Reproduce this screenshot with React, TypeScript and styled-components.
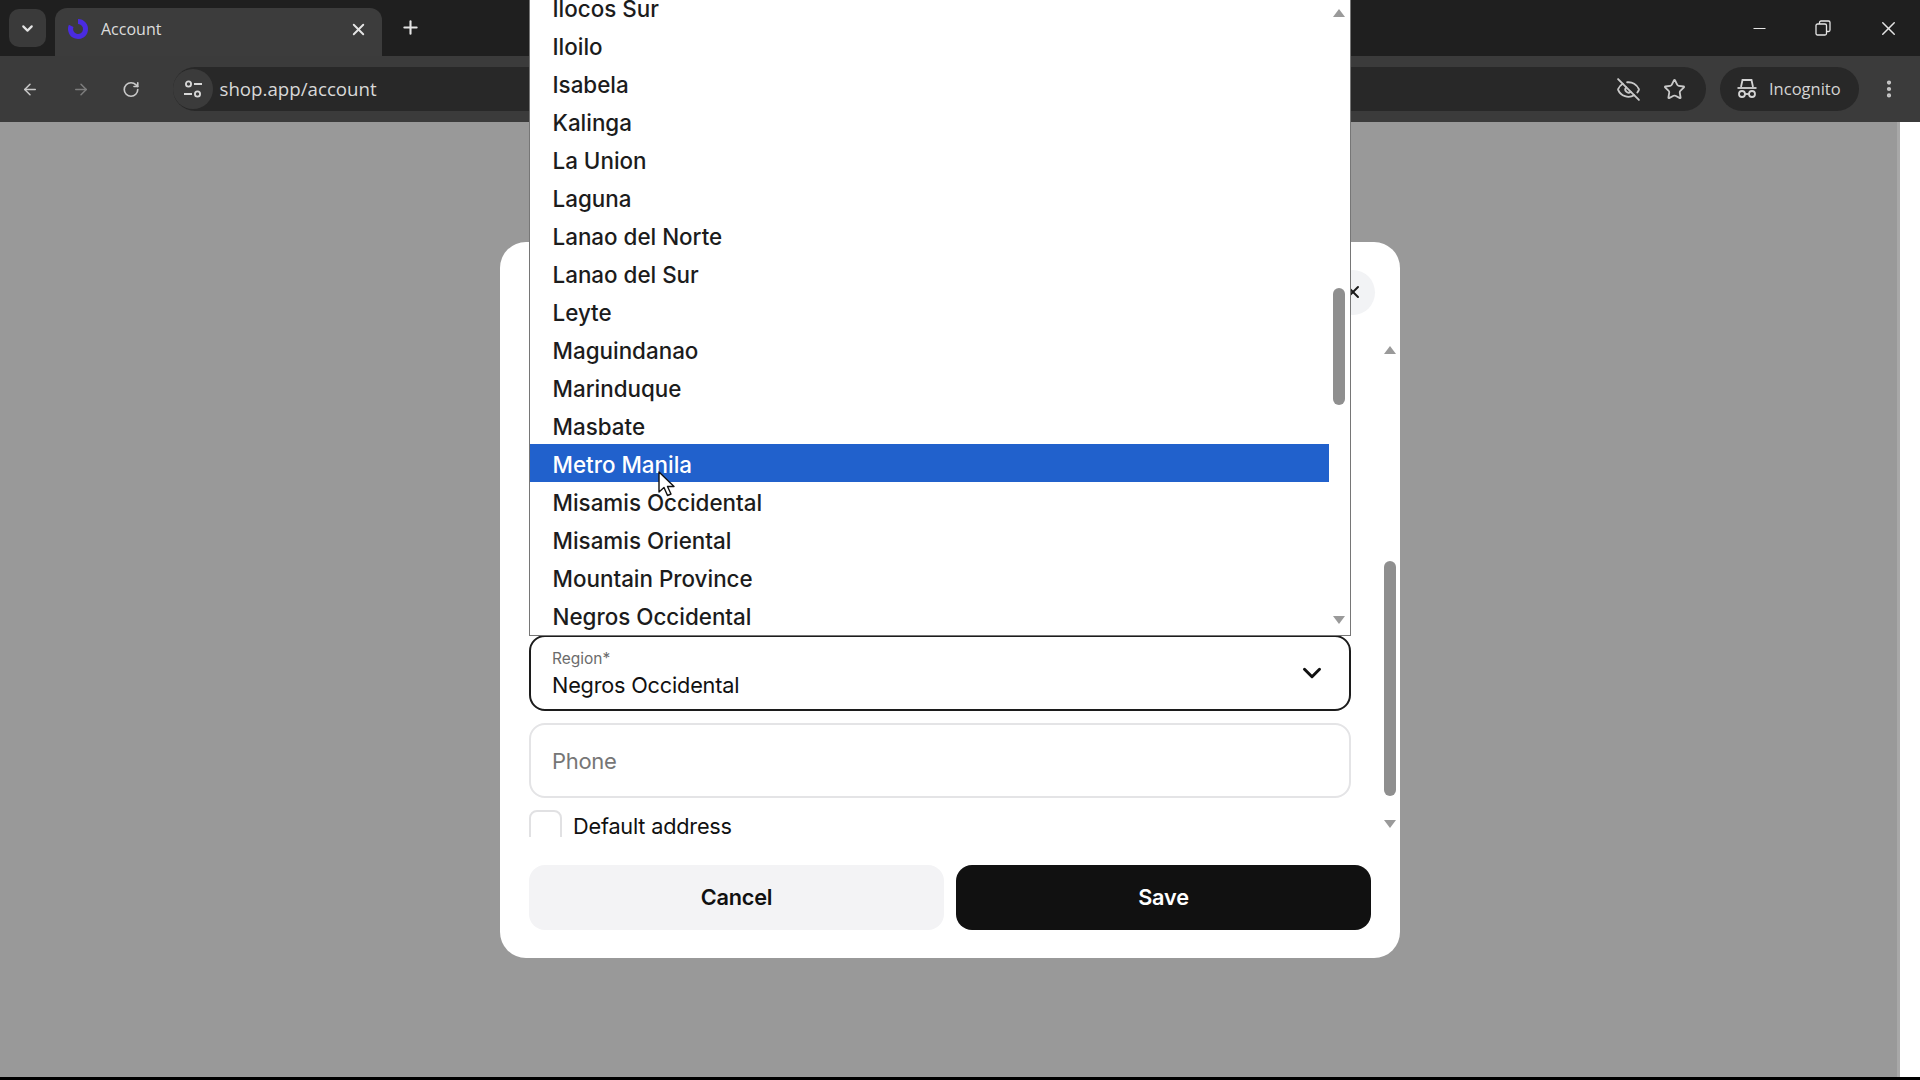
import React from 'react';
import styled, { createGlobalStyle } from 'styled-components';
import {
  ArrowLeft,
  ArrowRight,
  ChevronDown,
  EllipsisVertical,
  EyeOff,
  Minus,
  Plus,
  RotateCw,
  Star,
  X,
} from 'lucide-react';

const regions = [
  'Ilocos Sur',
  'Iloilo',
  'Isabela',
  'Kalinga',
  'La Union',
  'Laguna',
  'Lanao del Norte',
  'Lanao del Sur',
  'Leyte',
  'Maguindanao',
  'Marinduque',
  'Masbate',
  'Metro Manila',
  'Misamis Occidental',
  'Misamis Oriental',
  'Mountain Province',
  'Negros Occidental',
];

const GlobalStyle = createGlobalStyle`
  html, body {
    margin: 0;
    padding: 0;
    background: #000;
  }
  body {
    font-family: Inter, "Liberation Sans", sans-serif;
    overflow: hidden;
  }
  * {
    box-sizing: border-box;
  }
`;

const Screen = styled.div`
  position: relative;
  width: 1920px;
  height: 1080px;
  display: flex;
  flex-direction: column;
  overflow: hidden;
`;

const TabStrip = styled.div`
  height: 56px;
  flex: none;
  background: #1f1f1f;
  display: flex;
  align-items: flex-end;
  padding-left: 9px;
  color: #e4e4e4;
`;

const TabMenu = styled.div`
  width: 37px;
  height: 38px;
  margin-bottom: 9px;
  border-radius: 10px;
  background: #3a3a3a;
  display: flex;
  align-items: center;
  justify-content: center;
`;

const Tab = styled.div`
  width: 327px;
  height: 48px;
  margin-left: 9px;
  padding: 0 14px 6px 12px;
  border-radius: 12px 12px 0 0;
  background: #3c3c3c;
  display: flex;
  align-items: center;
`;

const TabTitle = styled.span`
  flex: 1;
  margin-left: 12px;
  font-family: "Open Sans", sans-serif;
  font-size: 16px;
  color: #dcdcdc;
`;

const NewTab = styled.div`
  margin: 0 0 18px 18px;
  display: flex;
`;

const WindowControls = styled.div`
  margin-left: auto;
  height: 56px;
  padding-right: 20px;
  display: flex;
  align-items: center;
  gap: 46px;
`;

const Toolbar = styled.div`
  height: 66px;
  flex: none;
  background: #3b3b3b;
  display: flex;
  align-items: center;
  padding-left: 21px;
  color: #c9c9c9;
`;

const NavButton = styled.div<{ $dim?: boolean }>`
  width: 18px;
  display: flex;
  justify-content: center;
  margin-right: 32.5px;
  color: ${({ $dim }) => ($dim ? '#7d7d7d' : '#c9c9c9')};
`;

const AddressBar = styled.div`
  width: 1533.5px;
  height: 44px;
  padding-right: 20px;
  border-radius: 22px;
  background: #282828;
  display: flex;
  align-items: center;
`;

const SiteButton = styled.div`
  width: 40px;
  height: 40px;
  border-radius: 50%;
  background: #3b3b3b;
  display: flex;
  align-items: center;
  justify-content: center;
`;

const AddressText = styled.span`
  flex: 1;
  margin: 0 0 2px 7px;
  font-family: "Open Sans", sans-serif;
  font-size: 18.7px;
  color: #d8d8d8;
`;

const AddressIcons = styled.div`
  display: flex;
  align-items: center;
  gap: 22px;
`;

const IncognitoPill = styled.div`
  width: 139px;
  height: 44px;
  margin-left: 14px;
  padding: 0 0 2px 16px;
  border-radius: 22px;
  background: #282828;
  display: flex;
  align-items: center;
  gap: 11px;
  font-family: "Open Sans", sans-serif;
  font-size: 16.5px;
  color: #d4d4d4;
`;

const ToolbarMenu = styled.div`
  margin-left: 19px;
  display: flex;
`;

const Body = styled.div`
  flex: 1;
  display: flex;
  min-height: 0;
`;

const Overlay = styled.div`
  flex: 1;
  background: #999999;
  box-shadow: inset -3px 0 0 #a8a8a8;
  display: flex;
  align-items: center;
  justify-content: center;
`;

const Gutter = styled.div`
  width: 20px;
  flex: none;
  background: #fff;
`;

const BottomEdge = styled.div`
  height: 3px;
  flex: none;
  background: #000;
`;

const Modal = styled.div`
  width: 900px;
  height: 716px;
  padding: 28px 4px 28px 29px;
  border-radius: 26px;
  background: #fff;
  display: flex;
  flex-direction: column;
`;

const ModalHeader = styled.div`
  height: 45px;
  flex: none;
  padding-right: 21px;
  display: flex;
  justify-content: flex-end;
`;

const CloseButton = styled.div`
  width: 44px;
  height: 45px;
  border-radius: 50%;
  background: #f2f3f5;
  display: flex;
  align-items: center;
  justify-content: center;
  color: #1a1a1a;
`;

const ModalBody = styled.div`
  height: 497px;
  margin-top: 25px;
  flex: none;
  display: flex;
  gap: 33px;
`;

const Fields = styled.div`
  width: 822px;
  height: 100%;
  overflow: hidden;
  display: flex;
  flex-direction: column;
  justify-content: flex-end;
`;

const SelectBox = styled.div`
  height: 76px;
  flex: none;
  padding: 0 22px 0 21px;
  border: 2px solid #1c1c1c;
  border-radius: 16px;
  display: flex;
  align-items: center;
  justify-content: space-between;
`;

const SelectText = styled.div`
  padding-top: 3px;
  display: flex;
  flex-direction: column;
`;

const SelectLabel = styled.span`
  font-size: 15.5px;
  line-height: 20px;
  color: #6b6b6b;
`;

const SelectValue = styled.span`
  margin-top: 2px;
  font-size: 21.7px;
  line-height: 28px;
  letter-spacing: -0.2px;
  color: #111;
`;

const PhoneInput = styled.div`
  height: 75px;
  flex: none;
  margin-top: 12px;
  padding: 1px 21px 0;
  border: 2px solid #e4e4e6;
  border-radius: 16px;
  display: flex;
  align-items: center;
  font-size: 22px;
  letter-spacing: -0.3px;
  color: #767676;
`;

const CheckRow = styled.div`
  height: 27px;
  flex: none;
  margin-top: 12px;
  display: flex;
  gap: 11px;
`;

const CheckBox = styled.div`
  width: 33px;
  height: 36px;
  flex: none;
  border: 2px solid #e1e1e3;
  border-radius: 8px;
`;

const CheckLabel = styled.span`
  margin-top: 5px;
  font-size: 21.7px;
  line-height: 22px;
  letter-spacing: -0.2px;
  color: #111;
`;

const ScrollTrack = styled.div`
  width: 12px;
  padding-top: 6px;
  display: flex;
  flex-direction: column;
  align-items: center;
`;

const ScrollThumb = styled.div<{ $height: number; $top: number }>`
  width: 12px;
  height: ${({ $height }) => $height}px;
  margin-top: ${({ $top }) => $top}px;
  border-radius: 6px;
  background: #8f8f8f;
`;

const ArrowUp = styled.div`
  width: 0;
  height: 0;
  border-left: 6px solid transparent;
  border-right: 6px solid transparent;
  border-bottom: 8px solid #9a9a9a;
`;

const ArrowDown = styled(ArrowUp)<{ $top: number }>`
  margin-top: ${({ $top }) => $top}px;
  border-bottom: 0;
  border-top: 8px solid #9a9a9a;
`;

const ModalFooter = styled.div`
  margin-top: 28px;
  height: 65px;
  flex: none;
  display: flex;
  gap: 12px;
`;

const FooterButton = styled.div<{ $primary?: boolean }>`
  width: 415px;
  border-radius: 16px;
  background: ${({ $primary }) => ($primary ? '#111111' : '#f3f3f5')};
  color: ${({ $primary }) => ($primary ? '#fff' : '#111')};
  display: flex;
  align-items: center;
  justify-content: center;
  font-size: 21.7px;
  font-weight: 600;
  letter-spacing: -0.2px;
`;

const Dropdown = styled.div`
  position: absolute;
  left: 529px;
  top: 0;
  width: 822px;
  height: 636px;
  background: #fff;
  border: 1px solid #767676;
  border-top: 0;
  display: flex;
  overflow: hidden;
`;

const OptionList = styled.div`
  width: 799px;
  margin-top: -12px;
  flex: none;
`;

const Option = styled.div<{ $active?: boolean }>`
  height: 38px;
  padding: 2px 0 0 22.5px;
  display: flex;
  align-items: center;
  font-size: 22.4px;
  font-weight: 500;
  background: ${({ $active }) => ($active ? '#2161cc' : 'transparent')};
  color: ${({ $active }) => ($active ? '#fff' : '#1c1c1c')};
`;

const DropdownScroll = styled.div`
  flex: 1;
  padding: 9px 1px 0 0;
  display: flex;
  flex-direction: column;
  align-items: center;
`;

const Cursor = styled.svg`
  position: absolute;
  left: 657px;
  top: 471px;
`;

function TuneIcon() {
  return (
    <svg width="20" height="20" viewBox="0 0 20 20" fill="none" stroke="#d8d8d8" strokeWidth="1.8">
      <circle cx="5.5" cy="5" r="2.6" />
      <path d="M11 5h8M1 15h8" />
      <circle cx="14.5" cy="15" r="2.6" />
    </svg>
  );
}

function RestoreIcon() {
  return (
    <svg width="16" height="16" viewBox="0 0 16 16" fill="none" stroke="#e4e4e4" strokeWidth="1.3">
      <rect x="1" y="4" width="10.5" height="11" rx="1.5" />
      <path d="M4.5 4V2.5A1.5 1.5 0 0 1 6 1h7.5A1.5 1.5 0 0 1 15 2.5V10a1.5 1.5 0 0 1-1.5 1.5h-2" />
    </svg>
  );
}

function IncognitoIcon() {
  return (
    <svg width="22" height="22" viewBox="0 0 22 22" fill="none" stroke="#d4d4d4" strokeWidth="1.8">
      <path d="M5 10l1.5-7h9L17 10" />
      <path d="M1.5 11h19" />
      <circle cx="6" cy="17" r="3" />
      <circle cx="16" cy="17" r="3" />
      <path d="M9 17h4" />
    </svg>
  );
}

function Favicon() {
  return (
    <svg width="22" height="22" viewBox="0 0 22 22" fill="none">
      <path d="M11 3.5a7.5 7.5 0 1 1-6.8 4.4" stroke="#4a2be0" strokeWidth="5" />
    </svg>
  );
}

export default function App() {
  return (
    <>
      <GlobalStyle />
      <Screen>
        <TabStrip>
          <TabMenu>
            <ChevronDown size={17} strokeWidth={3} />
          </TabMenu>
          <Tab>
            <Favicon />
            <TabTitle>Account</TabTitle>
            <X size={19} strokeWidth={2.4} />
          </Tab>
          <NewTab>
            <Plus size={21} strokeWidth={2.4} />
          </NewTab>
          <WindowControls>
            <Minus size={19} strokeWidth={1.5} />
            <RestoreIcon />
            <X size={23} strokeWidth={1.5} />
          </WindowControls>
        </TabStrip>
        <Toolbar>
          <NavButton>
            <ArrowLeft size={23} strokeWidth={2} />
          </NavButton>
          <NavButton $dim>
            <ArrowRight size={23} strokeWidth={2} />
          </NavButton>
          <NavButton>
            <RotateCw size={21} strokeWidth={2.2} />
          </NavButton>
          <AddressBar>
            <SiteButton>
              <TuneIcon />
            </SiteButton>
            <AddressText>shop.app/account</AddressText>
            <AddressIcons>
              <EyeOff size={25} strokeWidth={1.8} />
              <Star size={23} strokeWidth={1.9} />
            </AddressIcons>
          </AddressBar>
          <IncognitoPill>
            <IncognitoIcon />
            Incognito
          </IncognitoPill>
          <ToolbarMenu>
            <EllipsisVertical size={22} strokeWidth={2.6} />
          </ToolbarMenu>
        </Toolbar>
        <Body>
          <Overlay>
            <Modal>
              <ModalHeader>
                <CloseButton>
                  <X size={20} strokeWidth={2.4} />
                </CloseButton>
              </ModalHeader>
              <ModalBody>
                <Fields>
                  <SelectBox>
                    <SelectText>
                      <SelectLabel>Region*</SelectLabel>
                      <SelectValue>Negros Occidental</SelectValue>
                    </SelectText>
                    <ChevronDown size={30} strokeWidth={2.4} color="#111" />
                  </SelectBox>
                  <PhoneInput>Phone</PhoneInput>
                  <CheckRow>
                    <CheckBox />
                    <CheckLabel>Default address</CheckLabel>
                  </CheckRow>
                </Fields>
                <ScrollTrack>
                  <ArrowUp />
                  <ScrollThumb $height={235} $top={207} />
                  <ArrowDown $top={24} />
                </ScrollTrack>
              </ModalBody>
              <ModalFooter>
                <FooterButton>Cancel</FooterButton>
                <FooterButton $primary>Save</FooterButton>
              </ModalFooter>
            </Modal>
          </Overlay>
          <Gutter />
        </Body>
        <BottomEdge />
        <Dropdown>
          <OptionList>
            {regions.map((region) => (
              <Option key={region} $active={region === 'Metro Manila'}>
                {region}
              </Option>
            ))}
          </OptionList>
          <DropdownScroll>
            <ArrowUp />
            <ScrollThumb $height={117} $top={271} />
            <ArrowDown $top={211} />
          </DropdownScroll>
        </Dropdown>
        <Cursor width="20" height="28" viewBox="0 0 20 28">
          <path
            d="M2 1v20l5-4.5 3.5 8 3.5-1.5-3.5-7.5H17z"
            fill="#fff"
            stroke="#111"
            strokeWidth="1.4"
            strokeLinejoin="round"
          />
        </Cursor>
      </Screen>
    </>
  );
}
